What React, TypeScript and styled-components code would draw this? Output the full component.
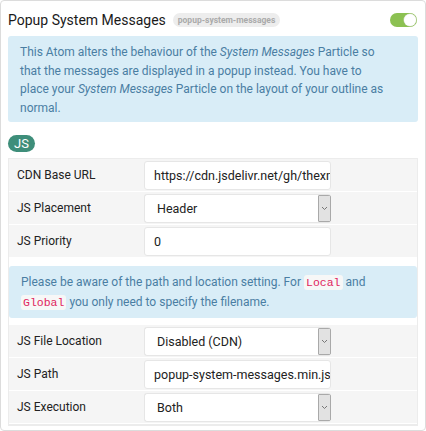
import React from "react";
import styled, { createGlobalStyle } from "styled-components";

const Global = createGlobalStyle`
  html, body { margin: 0; padding: 0; background: #fff; }
  body { font-family: Roboto, "Liberation Sans", sans-serif; }
  * { box-sizing: border-box; }
`;

const Card = styled.div`
  width: 426px;
  height: 431px;
  border: 1px solid #dcdcdc;
  border-radius: 4px;
  padding: 7px 7px 0 7px;
  background: #fff;
  overflow: hidden;
`;

const Header = styled.div`
  display: flex;
  align-items: center;
  height: 23px;
`;

const Title = styled.h2`
  margin: 0;
  font-family: Roboto, sans-serif;
  font-size: 14px;
  font-weight: 400;
  color: #1a1a1a;
`;

const Slug = styled.span`
  margin-left: 7px;
  background: #ededed;
  color: #aaa;
  font-family: Roboto, sans-serif;
  font-size: 8.5px;
  font-weight: 700;
  line-height: 10px;
  padding: 2px 5px;
  border-radius: 7px;
`;

const Toggle = styled.span`
  margin-left: auto;
  margin-right: 1px;
  width: 27px;
  height: 14px;
  border-radius: 7px;
  background: #8cc152;
  display: flex;
  justify-content: flex-end;
  align-items: center;
  padding: 1px;
`;

const Knob = styled.span`
  width: 12px;
  height: 12px;
  border-radius: 50%;
  background: #fff;
  box-shadow: 0 0 0 0.5px #cfd8c4;
`;

const Alert = styled.div<{ $pad: string }>`
  background: #d9edf7;
  color: #4a7ea3;
  border-radius: 3px;
  padding: ${(p) => p.$pad};
  font-family: Roboto, sans-serif;
  font-size: 12px;
  line-height: 18.5px;
  em { font-style: italic; }
`;

const TopAlert = styled(Alert)`
  margin-top: 5px;
`;

const Code = styled.code`
  font-family: "Liberation Mono", "DejaVu Sans Mono", monospace;
  font-size: 11.5px;
  color: #e0245e;
  background: #f7f7f7;
  border-radius: 3px;
  padding: 1px 2px;
`;

const Section = styled.div`
  margin-top: 13px;
  display: flex;
`;

const Pill = styled.span`
  background: #3e8e7a;
  color: #fff;
  font-family: Roboto, sans-serif;
  font-size: 13px;
  line-height: 15px;
  padding: 1px 6px;
  border-radius: 9px;
`;

const Table = styled.div`
  margin-top: 6px;
  border: 1px solid #ececec;
  border-bottom-width: 2px;
  width: 410px;
`;

const Row = styled.div`
  display: grid;
  grid-template-columns: 135px 187px 1fr;
  background: #f5f5f5;
  border-bottom: 1px solid #fff;
  padding: 2px 0 1px 0;
  align-items: start;
`;

const Label = styled.div`
  font-family: Roboto, sans-serif;
  font-size: 12px;
  line-height: 15px;
  color: #222;
  padding-left: 8px;
  padding-top: 7px;
`;

const Input = styled.div`
  height: 29px;
  background: #fff;
  border: 1px solid #e6e6e6;
  border-radius: 3px;
  font-family: Roboto, sans-serif;
  font-size: 12.5px;
  color: #222;
  display: flex;
  align-items: center;
  padding-left: 9px;
  white-space: nowrap;
  overflow: hidden;
`;

const Select = styled(Input)`
  padding-left: 12px;
  padding-right: 0;
  border-right: none;
`;

const SelectText = styled.span`
  flex: 1;
`;

const Arrow = styled.span`
  width: 13px;
  height: 100%;
  background: #e2e2e2;
  border: 1px solid #a9a9a9;
  border-radius: 1px;
  display: flex;
  align-items: center;
  justify-content: center;
`;

const AlertRow = styled.div`
  background: #fff;
  padding: 8px 0 7px 0;
`;

const Caret = () => (
  <svg width="7" height="5" viewBox="0 0 7 5">
    <path d="M1 1 L3.5 3.5 L6 1" fill="none" stroke="#777" strokeWidth="1" />
  </svg>
);

export default function App() {
  return (
    <>
      <Global />
      <Card>
        <Header>
          <Title>Popup System Messages</Title>
          <Slug>popup-system-messages</Slug>
          <Toggle>
            <Knob />
          </Toggle>
        </Header>
        <TopAlert $pad="7px 32px 5px 12px">
          This Atom alters the behaviour of the <em>System Messages</em> Particle so that the
          messages are displayed in a popup instead. You have to place your{" "}
          <em>System Messages</em> Particle on the layout of your outline as normal.
        </TopAlert>
        <Section>
          <Pill>JS</Pill>
        </Section>
        <Table>
          <Row>
            <Label>CDN Base URL</Label>
            <Input>https://cdn.jsdelivr.net/gh/thexmanxyz/popup-system-messages</Input>
            <span />
          </Row>
          <Row>
            <Label>JS Placement</Label>
            <Select>
              <SelectText>Header</SelectText>
              <Arrow>
                <Caret />
              </Arrow>
            </Select>
            <span />
          </Row>
          <Row>
            <Label>JS Priority</Label>
            <Input>0</Input>
            <span />
          </Row>
          <AlertRow>
            <Alert $pad="7px 12px 6px 12px">
              Please be aware of the path and location setting. For <Code>Local</Code> and{" "}
              <Code>Global</Code> you only need to specify the filename.
            </Alert>
          </AlertRow>
          <Row>
            <Label>JS File Location</Label>
            <Select>
              <SelectText>Disabled (CDN)</SelectText>
              <Arrow>
                <Caret />
              </Arrow>
            </Select>
            <span />
          </Row>
          <Row>
            <Label>JS Path</Label>
            <Input>popup-system-messages.min.js</Input>
            <span />
          </Row>
          <Row>
            <Label>JS Execution</Label>
            <Select>
              <SelectText>Both</SelectText>
              <Arrow>
                <Caret />
              </Arrow>
            </Select>
            <span />
          </Row>
        </Table>
      </Card>
    </>
  );
}
